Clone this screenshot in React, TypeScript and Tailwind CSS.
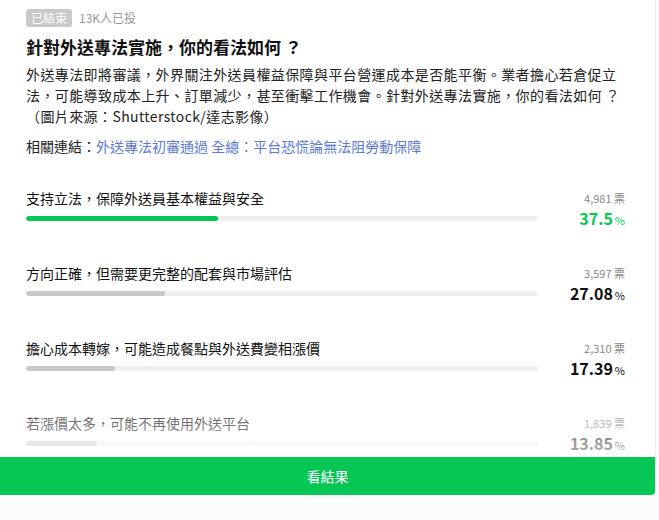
const options = [
  { label: '支持立法，保障外送員基本權益與安全', votes: '4,981', pct: 37.5, text: '37.5', top: true },
  { label: '方向正確，但需要更完整的配套與市場評估', votes: '3,597', pct: 27.08, text: '27.08' },
  { label: '擔心成本轉嫁，可能造成餐點與外送費變相漲價', votes: '2,310', pct: 17.39, text: '17.39' },
  { label: '若漲價太多，可能不再使用外送平台', votes: '1,839', pct: 13.85, text: '13.85' },
]

function Option({ o }: { o: (typeof options)[number] }) {
  return (
    <div className="flex items-start h-[75px]">
      <div className="flex-1 pt-[2px]">
        <div className="text-[14px] leading-[20px] text-[#111]">{o.label}</div>
        <div className="mt-[8px] h-[5px] w-[512px] rounded-full bg-[#efefef] overflow-hidden">
          <div
            className={o.top ? 'h-full rounded-full bg-[#06c755]' : 'h-full rounded-full bg-[#c8c8c8]'}
            style={{ width: `${o.pct}%` }}
          />
        </div>
      </div>
      <div className="w-[87px] flex flex-col items-end pr-[4px] pt-[5px]">
        <div className="text-[11px] leading-[14px] text-[#888]">{o.votes} 票</div>
        <div className={o.top ? 'mt-[3px] leading-[20px] text-[#06c755]' : 'mt-[3px] leading-[20px] text-[#111]'}>
          <span className="text-[16px] font-bold">{o.text}</span>
          <span className="text-[11px] ml-[2px]">%</span>
        </div>
      </div>
    </div>
  )
}

export default function App() {
  return (
    <div className="w-[659px] h-[520px] bg-[#fcfcfc] overflow-hidden" style={{ fontFamily: '"Noto Sans CJK TC", "Noto Sans", sans-serif' }}>
      <div className="w-[656px] bg-white border-r border-[#ececec] rounded-br-[4px] relative">
        <div className="px-[26px] pt-[9px]">
          <div className="flex items-center gap-[7px]">
            <span className="bg-[#c9c9c9] text-white text-[12px] leading-[18px] px-[5px] rounded-[3px]">已結束</span>
            <span className="text-[12px] text-[#999]">13K人已投</span>
          </div>
          <h1 className="mt-[8px] text-[17px] leading-[24px] font-bold text-[#111]">針對外送專法實施，你的看法如何 ？</h1>
          <p className="mt-[5px] text-[14px] leading-[21px] text-[#222] tracking-[0.4px] whitespace-nowrap">
            <span className="block">外送專法即將審議，外界關注外送員權益保障與平台營運成本是否能平衡。業者擔心若倉促立</span>
            <span className="block">法，可能導致成本上升、訂單減少，甚至衝擊工作機會。針對外送專法實施，你的看法如何 ？</span>
            <span className="block">（圖片來源：Shutterstock/達志影像）</span>
          </p>
          <p className="mt-[9px] text-[14px] leading-[21px] text-[#222]">
            相關連結：<span className="text-[#5b7bd5]">外送專法初審通過 全總：平台恐慌論無法阻勞動保障</span>
          </p>
          <div className="mt-[29px] h-[271px] overflow-hidden relative">
            {options.map((o) => (
              <Option key={o.label} o={o} />
            ))}
            <div className="absolute left-0 right-0 bottom-0 h-[80px] bg-gradient-to-b from-white/0 to-white/70" />
          </div>
        </div>
        <button className="w-full h-[38px] bg-[#06c755] text-white text-[14px] rounded-br-[4px]">看結果</button>
      </div>
    </div>
  )
}
